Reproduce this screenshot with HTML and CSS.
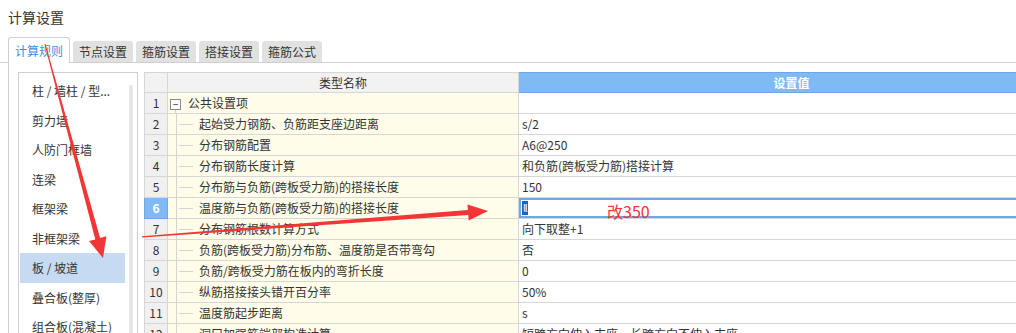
FILE: index.html
```html
<!DOCTYPE html>
<html lang="zh-CN">
<head>
  <meta charset="UTF-8" />
  <title>计算设置</title>
  <link rel="stylesheet" href="styles.css">
</head>
<body>
  <div class="page">
    <h1 class="title">计算设置</h1>

    <div class="tabs">
      <div class="tab active">计算规则</div>
      <div class="tab">节点设置</div>
      <div class="tab">箍筋设置</div>
      <div class="tab">搭接设置</div>
      <div class="tab">箍筋公式</div>
    </div>

    <div class="pane">
      <div class="side">
        <ul class="side-list">
          <li>柱 / 墙柱 / 型...</li>
          <li>剪力墙</li>
          <li>人防门框墙</li>
          <li>连梁</li>
          <li>框架梁</li>
          <li>非框架梁</li>
          <li class="current">板 / 坡道</li>
          <li>叠合板(整厚)</li>
          <li>组合板(混凝土)</li>
        </ul>
        <div class="scroll"></div>
      </div>

      <table class="grid">
        <colgroup>
          <col class="c-num">
          <col class="c-name">
          <col class="c-val">
        </colgroup>
        <thead>
          <tr>
            <th class="num"></th>
            <th class="name">类型名称</th>
            <th class="val">设置值</th>
          </tr>
        </thead>
        <tbody>
          <tr>
            <td class="num">1</td>
            <td class="name root"><span class="fold">−</span>公共设置项</td>
            <td class="val"></td>
          </tr>
          <tr>
            <td class="num">2</td>
            <td class="name"><span class="branch"></span>起始受力钢筋、负筋距支座边距离</td>
            <td class="val">s/2</td>
          </tr>
          <tr>
            <td class="num">3</td>
            <td class="name"><span class="branch"></span>分布钢筋配置</td>
            <td class="val">A6@250</td>
          </tr>
          <tr>
            <td class="num">4</td>
            <td class="name"><span class="branch"></span>分布钢筋长度计算</td>
            <td class="val">和负筋(跨板受力筋)搭接计算</td>
          </tr>
          <tr>
            <td class="num">5</td>
            <td class="name"><span class="branch"></span>分布筋与负筋(跨板受力筋)的搭接长度</td>
            <td class="val">150</td>
          </tr>
          <tr>
            <td class="num on">6</td>
            <td class="name"><span class="branch"></span>温度筋与负筋(跨板受力筋)的搭接长度</td>
            <td class="val editing"><span class="sel">ll</span></td>
          </tr>
          <tr>
            <td class="num">7</td>
            <td class="name"><span class="branch"></span>分布钢筋根数计算方式</td>
            <td class="val">向下取整+1</td>
          </tr>
          <tr>
            <td class="num">8</td>
            <td class="name"><span class="branch"></span>负筋(跨板受力筋)分布筋、温度筋是否带弯勾</td>
            <td class="val">否</td>
          </tr>
          <tr>
            <td class="num">9</td>
            <td class="name"><span class="branch"></span>负筋/跨板受力筋在板内的弯折长度</td>
            <td class="val">0</td>
          </tr>
          <tr>
            <td class="num">10</td>
            <td class="name"><span class="branch"></span>纵筋搭接接头错开百分率</td>
            <td class="val">50%</td>
          </tr>
          <tr>
            <td class="num">11</td>
            <td class="name"><span class="branch"></span>温度筋起步距离</td>
            <td class="val">s</td>
          </tr>
          <tr>
            <td class="num">12</td>
            <td class="name"><span class="branch"></span>洞口加强筋端部构造计算</td>
            <td class="val">短跨方向伸入支座，长跨方向不伸入支座</td>
          </tr>
        </tbody>
      </table>
    </div>

    <!-- red annotation marks drawn over the screenshot -->
    <svg class="marks" width="1016" height="333" viewBox="0 0 1016 333">
      <polygon points="44.5,44 95.3,239.4 89,241.1 103,258 106.4,236.3 100.1,238 45.5,44" />
      <polygon points="142,236.3 467.9,210 467.5,204.5 488,211 468.7,220.5 468.3,215 142,237.6" />
    </svg>
    <div class="note">改350</div>
  </div>
</body>
</html>
```

FILE: styles.css
```css
body {
  margin: 0;
  font-family: "Microsoft YaHei", "Noto Sans CJK SC", sans-serif;
  font-size: 12px;
  color: #333;
  background: #fff;
  overflow: hidden;
}

.page {
  position: relative;
  width: 1016px;
  height: 333px;
  overflow: hidden;
}

.title {
  margin: 0;
  padding: 9px 8px 0;
  font-size: 14px;
  font-weight: normal;
  line-height: 17px;
}

.tabs {
  display: flex;
  align-items: flex-end;
  gap: 3px;
  margin-top: 11px;
  padding-left: 8px;
  height: 25px;
  border-bottom: 1px solid #cfcfcf;
}

.tab {
  width: 60px;
  height: 21px;
  line-height: 21px;
  text-align: center;
  background: #e1e1e1;
  border-radius: 3px 3px 0 0;
}

.tab.active {
  width: 62px;
  height: 26px;
  line-height: 26px;
  margin-bottom: -1px;
  box-sizing: border-box;
  background: #fff;
  border: 1px solid #cfcfcf;
  border-bottom: none;
  color: #3a8ee6;
}

.pane {
  display: flex;
  gap: 6px;
  margin-left: 8px;
  padding: 9px 0 0 9px;
  height: 280px;
  border-left: 1px solid #cfcfcf;
}

.side {
  display: flex;
  width: 120px;
  box-sizing: border-box;
  border: 1px solid #cfcfcf;
  flex-shrink: 0;
}

.side-list {
  list-style: none;
  margin: 0;
  padding: 3px 0 0 1px;
  width: 106px;
  box-sizing: border-box;
}

.side-list li {
  height: 29.5px;
  line-height: 29.5px;
  padding-left: 12px;
  white-space: nowrap;
}

.side-list li.current {
  background: #c6dbf1;
}

.scroll {
  width: 4px;
  margin: 12px 4px 0 4px;
  background: #e6e6e6;
  border-radius: 2px;
}

.grid {
  border-collapse: collapse;
  table-layout: fixed;
  width: 920px;
  flex-shrink: 0;
  align-self: flex-start;
}

.c-num { width: 23px; }
.c-name { width: 351px; }
.c-val { width: 546px; }

.grid th,
.grid td {
  padding: 0;
  border: 1px solid #d6d6d6;
  white-space: nowrap;
  overflow: hidden;
}

.grid th {
  height: 19px;
  line-height: 19px;
  font-weight: normal;
  background: #f2f2f2;
}

.grid th.val {
  background: #80baf5;
  border-color: #6ea7e6;
  color: #fff;
  font-weight: bold;
}

.grid td {
  height: 20px;
  line-height: 20px;
}

.grid td.num {
  background: #f0f0f0;
  text-align: center;
}

.grid td.num.on {
  background: #80baf5;
  border-color: #6ea7e6;
  color: #fff;
  font-weight: bold;
}

.grid td.name {
  background: #fffdea;
  padding-left: 8px;
}

.grid td.name.root {
  padding-left: 2px;
}

.grid td.val {
  padding-left: 3px;
}

.grid td.editing {
  box-shadow: inset 0 0 0 2px #6ea7e6;
}

.branch {
  display: inline-block;
  position: relative;
  width: 17px;
  height: 20px;
  margin-right: 6px;
  vertical-align: top;
  border-left: 1px solid #d4d4d4;
  box-sizing: border-box;
}

.branch::after {
  content: "";
  position: absolute;
  left: 2px;
  right: 0;
  top: 10px;
  border-top: 1px solid #d4d4d4;
}

.fold {
  display: inline-block;
  position: relative;
  width: 9px;
  height: 9px;
  line-height: 8px;
  margin-right: 7px;
  border: 1px solid #8a8a8a;
  text-align: center;
  font-size: 10px;
  vertical-align: middle;
  background: #fff;
}

.fold::after {
  content: "";
  position: absolute;
  left: 4px;
  top: 10px;
  height: 6px;
  border-left: 1px solid #d4d4d4;
}

.sel {
  display: inline-block;
  height: 14px;
  line-height: 14px;
  padding: 0 1px;
  margin-top: 3px;
  vertical-align: top;
  background: #1a63c6;
  color: #fff;
  font-size: 10px;
  letter-spacing: -1px;
}

.marks {
  position: absolute;
  left: 0;
  top: 0;
  pointer-events: none;
}

.marks polygon {
  fill: #f23535;
}

.note {
  position: absolute;
  left: 607px;
  top: 203px;
  color: #f23535;
  font-size: 16px;
  line-height: 16px;
}
```
